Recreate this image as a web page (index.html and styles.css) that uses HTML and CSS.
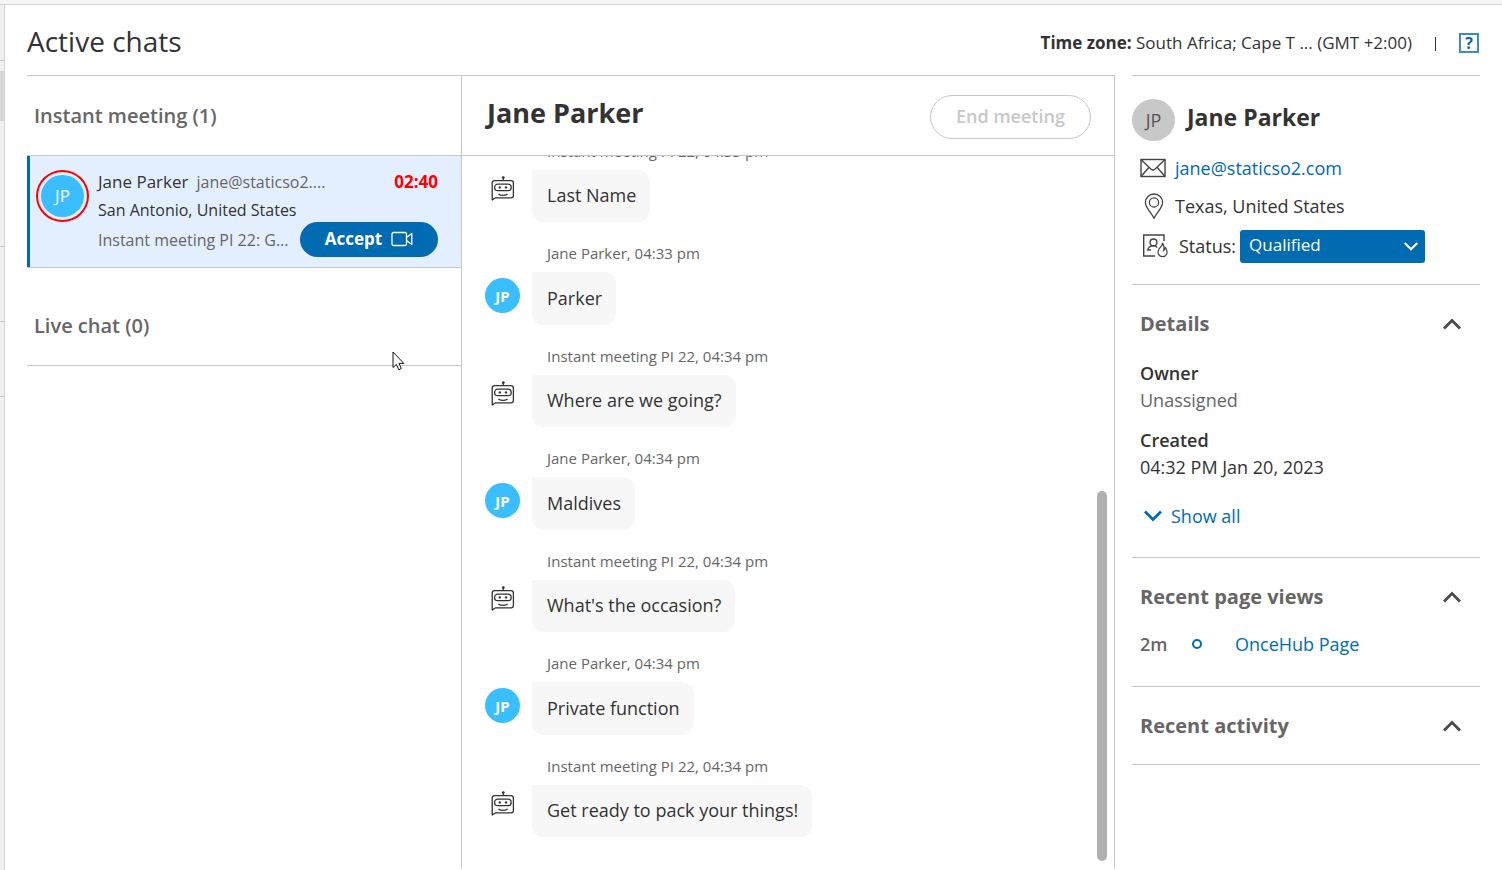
FILE: index.html
```html
<!DOCTYPE html>
<html lang="en">
<head>
    <meta charset="UTF-8">
    <meta name="viewport" content="width=device-width, initial-scale=1.0">
    <title>Active chats</title>
    <link rel="stylesheet" href="styles.css">
</head>
<body>

<!-- shared icons -->
<svg class="sprite" width="0" height="0" aria-hidden="true">
    <symbol id="icon-bot" viewBox="0 0 24 26">
        <path d="M1.2 24 V7 Q1.2 4.6 3.6 4.6 H20 Q22.4 4.6 22.4 7 V19.4 Q22.4 21.8 20 21.8 H4.6 Z" fill="none" stroke="#333" stroke-width="1.3" stroke-linejoin="round"/>
        <rect x="3.6" y="8.2" width="16.6" height="6.4" rx="3.2" fill="none" stroke="#333" stroke-width="1.3"/>
        <path d="M12.3 4.6 V2" stroke="#333" stroke-width="1.2"/>
        <circle cx="12.3" cy="1.6" r="1.4" fill="#333"/>
        <circle cx="8.8" cy="11.4" r="1.2" fill="#333"/>
        <circle cx="15" cy="11.4" r="1.2" fill="#333"/>
        <path d="M7.4 18.1 Q12 20.6 16.6 18.1" fill="none" stroke="#333" stroke-width="1.2"/>
    </symbol>
    <symbol id="icon-up" viewBox="0 0 20 14">
        <path d="M2 11.5 L10 3.5 L18 11.5" fill="none" stroke="currentColor" stroke-width="2.8"/>
    </symbol>
    <symbol id="icon-down" viewBox="0 0 20 14">
        <path d="M2 2.5 L10 10.5 L18 2.5" fill="none" stroke="currentColor" stroke-width="2.8"/>
    </symbol>
</svg>

<div class="topbar"></div>
<div class="app">
    <nav class="rail">
        <div class="rail-item first"></div>
        <div class="rail-active"></div>
        <div class="rail-item tall"></div>
        <div class="rail-item"></div>
        <div class="rail-item"></div>
    </nav>

    <main class="page">
        <header class="page-header">
            <h1>Active chats</h1>
            <div class="timezone">
                <span><b>Time zone:</b> South Africa; Cape T ... (GMT +2:00)</span>
                <span class="divider"></span>
                <a class="help" href="#" aria-label="Help">?</a>
            </div>
        </header>

        <div class="columns">
            <section class="queue">
                <h2>Instant meeting (1)</h2>
                <article class="card">
                    <div class="ring"><span class="avatar large">JP</span></div>
                    <div class="card-body">
                        <div class="card-row">
                            <span class="card-name">Jane Parker</span>
                            <span class="card-email">jane@staticso2....</span>
                            <span class="timer">02:40</span>
                        </div>
                        <div class="card-row">San Antonio, United States</div>
                        <div class="card-row last">
                            <span class="card-source">Instant meeting PI 22: G...</span>
                            <button class="accept" type="button">
                                Accept
                                <svg width="22" height="16" viewBox="0 0 22 16" fill="none" stroke="#fff" stroke-width="1.3" stroke-linejoin="round" aria-hidden="true">
                                    <rect x="1" y="1.5" width="14.5" height="13" rx="1.5"/>
                                    <path d="M15.5 6.5 L20.8 2.5 V13.5 L15.5 9.5"/>
                                </svg>
                            </button>
                        </div>
                    </div>
                </article>
                <h2 class="live">Live chat (0)</h2>
            </section>

            <section class="chat">
                <div class="chat-header">
                    <h2>Jane Parker</h2>
                    <button class="end" type="button" disabled>End meeting</button>
                </div>
                <div class="chat-body">
                    <div class="messages">
                        <div class="message">
                            <div class="meta">Instant meeting PI 22, 04:33 pm</div>
                            <svg class="bot" aria-hidden="true"><use href="#icon-bot"/></svg>
                            <p class="bubble">Last Name</p>
                        </div>
                        <div class="message visitor">
                            <div class="meta">Jane Parker, 04:33 pm</div>
                            <span class="avatar">JP</span>
                            <p class="bubble">Parker</p>
                        </div>
                        <div class="message">
                            <div class="meta">Instant meeting PI 22, 04:34 pm</div>
                            <svg class="bot" aria-hidden="true"><use href="#icon-bot"/></svg>
                            <p class="bubble">Where are we going?</p>
                        </div>
                        <div class="message visitor">
                            <div class="meta">Jane Parker, 04:34 pm</div>
                            <span class="avatar">JP</span>
                            <p class="bubble">Maldives</p>
                        </div>
                        <div class="message">
                            <div class="meta">Instant meeting PI 22, 04:34 pm</div>
                            <svg class="bot" aria-hidden="true"><use href="#icon-bot"/></svg>
                            <p class="bubble">What's the occasion?</p>
                        </div>
                        <div class="message visitor">
                            <div class="meta">Jane Parker, 04:34 pm</div>
                            <span class="avatar">JP</span>
                            <p class="bubble">Private function</p>
                        </div>
                        <div class="message">
                            <div class="meta">Instant meeting PI 22, 04:34 pm</div>
                            <svg class="bot" aria-hidden="true"><use href="#icon-bot"/></svg>
                            <p class="bubble">Get ready to pack your things!</p>
                        </div>
                    </div>
                    <div class="track"><div class="thumb"></div></div>
                </div>
            </section>

            <aside class="profile">
                <div class="contact">
                    <div class="contact-name">
                        <span class="avatar grey">JP</span>
                        <h2>Jane Parker</h2>
                    </div>
                    <div class="contact-row">
                        <svg width="26" height="26" viewBox="0 0 26 26" fill="none" stroke="#444" stroke-width="1.4" aria-hidden="true">
                            <rect x="1" y="4.5" width="24" height="17"/>
                            <path d="M1 4.5 L10.8 14 L13 15.2 L15.2 14 L25 4.5 M1 21.5 L9 12.3 M25 21.5 L17 12.3"/>
                        </svg>
                        <a href="#">jane@staticso2.com</a>
                    </div>
                    <div class="contact-row">
                        <svg width="26" height="26" viewBox="0 0 26 26" fill="none" stroke="#444" stroke-width="1.3" aria-hidden="true">
                            <path d="M14 25.2 C11.5 20 5.4 14.6 5.4 9.4 A8.6 8.4 0 0 1 22.6 9.4 C22.6 14.6 16.5 20 14 25.2 Z"/>
                            <circle cx="14" cy="9.4" r="4.6"/>
                        </svg>
                        <span>Texas, United States</span>
                    </div>
                    <div class="contact-row status">
                        <svg width="26" height="26" viewBox="0 0 26 26" fill="none" stroke="#444" stroke-width="1.4" aria-hidden="true">
                            <path d="M22 8 V2 H1.7 V23 H13"/>
                            <circle cx="11.5" cy="9.4" r="3.4"/>
                            <path d="M5.6 17.6 C6 14.6 8 12.9 11.5 12.9 C13.4 12.9 14.6 13.6 15.2 14.6 M5.6 17 H9"/>
                            <path d="M20.3 9.8 C21 12.6 18 14 16.8 16.4 C15 20 16.8 23.6 20.6 23.6 C24.6 23.6 26 19.6 24.4 16.4 L23.4 14.2 C23.4 16 22.6 16.8 21.6 17.6 C22.4 14.8 22.2 12 20.3 9.8 Z" stroke-width="1.2"/>
                        </svg>
                        <label for="status">Status:</label>
                        <span class="select">
                            <select id="status">
                                <option>Qualified</option>
                            </select>
                            <svg width="16" height="11" viewBox="0 0 20 14" aria-hidden="true"><use href="#icon-down"/></svg>
                        </span>
                    </div>
                </div>

                <div class="panel details">
                    <button class="panel-title" type="button">Details <svg class="chevron" aria-hidden="true"><use href="#icon-up"/></svg></button>
                    <dl>
                        <dt>Owner</dt>
                        <dd class="muted">Unassigned</dd>
                        <dt>Created</dt>
                        <dd>04:32 PM Jan 20, 2023</dd>
                    </dl>
                    <a class="show-all" href="#"><svg class="chevron" aria-hidden="true"><use href="#icon-down"/></svg>Show all</a>
                </div>

                <div class="panel views">
                    <button class="panel-title" type="button">Recent page views <svg class="chevron" aria-hidden="true"><use href="#icon-up"/></svg></button>
                    <div class="view">
                        <span class="age">2m</span>
                        <span class="dot"></span>
                        <a href="#">OnceHub Page</a>
                    </div>
                </div>

                <div class="panel activity">
                    <button class="panel-title" type="button">Recent activity <svg class="chevron" aria-hidden="true"><use href="#icon-up"/></svg></button>
                </div>
            </aside>
        </div>
    </main>
</div>

<svg class="pointer" width="13" height="20" viewBox="0 0 13 20" aria-hidden="true">
    <path d="M1 1 V16.5 L4.4 13.4 L6.8 18.8 L9.3 17.6 L7 12.4 H11.8 Z" fill="#fff" stroke="#112" stroke-width="1"/>
</svg>

</body>
</html>
```
FILE: styles.css
```css
* {
    box-sizing: border-box;
}
body {
    font-family: "Open Sans", "Noto Sans", sans-serif;
    font-size: 18px;
    line-height: 24px;
    color: #333;
    background-color: #fff;
    margin: 0;
    height: 100vh;
    display: flex;
    flex-direction: column;
    overflow: hidden;
}
h1, h2, p, dl, dd {
    margin: 0;
}
a {
    color: #006bb1;
    text-decoration: none;
}
button, select {
    font: inherit;
    cursor: pointer;
}
.sprite {
    position: absolute;
}
.topbar {
    height: 5px;
    flex: none;
    background-color: #f5f5f5;
    border-bottom: 1px solid #d5d5d5;
}
.app {
    flex: 1;
    min-height: 0;
    display: flex;
}

/* left edge of the site menu */
.rail {
    width: 5px;
    flex: none;
    background-color: #f0f0f0;
    border-right: 1px solid #d5d5d5;
}
.rail-item {
    height: 75px;
    border-bottom: 1px solid #c8c8c8;
}
.rail-item.first {
    height: 56px;
    margin-bottom: 10px;
}
.rail-item.tall {
    height: 126px;
}
.rail-active {
    height: 50px;
    background-color: #d6d7d9;
}

.page {
    flex: 1;
    min-width: 0;
    display: flex;
    flex-direction: column;
    padding: 0 22px 2px;
}
.page-header {
    height: 70px;
    flex: none;
    display: flex;
    align-items: center;
    justify-content: space-between;
    padding-top: 2px;
}
h1 {
    font-size: 28px;
    line-height: 36px;
    font-weight: 400;
}
.timezone {
    display: flex;
    align-items: center;
    font-size: 17px;
    padding: 4px 1px 0 0;
}
.divider {
    width: 1px;
    height: 14px;
    background-color: #333;
    margin: 2px 23px 0;
}
.help {
    width: 20px;
    height: 20px;
    border: 2px solid #3c8cc8;
    font-size: 16px;
    line-height: 16px;
    font-weight: 700;
    text-align: center;
}
.columns {
    flex: 1;
    min-height: 0;
    display: grid;
    grid-template-columns: 435px minmax(0, 1fr) 365px;
    grid-template-rows: minmax(0, 1fr);
}

/* queue */
.queue, .chat {
    border-top: 1px solid #c6c6c6;
    border-right: 1px solid #c6c6c6;
}
.queue h2 {
    font-size: 20px;
    line-height: 79px;
    font-weight: 600;
    color: #666;
    padding-left: 7px;
}
.queue .live {
    line-height: 78px;
    padding-top: 19px;
    border-bottom: 1px solid #c6c6c6;
}
.card {
    display: flex;
    gap: 9px;
    background-color: #e3efff;
    border-top: 1px solid #c6c6c6;
    border-bottom: 1px solid #c6c6c6;
    box-shadow: inset 3px 0 #006bb1;
    padding: 12px 23px 12px 9px;
}
.avatar {
    display: flex;
    align-items: center;
    justify-content: center;
    width: 35px;
    height: 35px;
    border-radius: 50%;
    background-color: #3bbeff;
    color: #fff;
    font-size: 15px;
    font-weight: 700;
}
.avatar.large {
    width: 43px;
    height: 42px;
    font-size: 17px;
    font-weight: 400;
}
.avatar.grey {
    width: 43px;
    height: 42px;
    background-color: #c8c8c8;
    color: #555;
    font-size: 18px;
    font-weight: 400;
}
.ring {
    flex: none;
    width: 53px;
    height: 52px;
    margin-top: 2px;
    display: flex;
    align-items: center;
    justify-content: center;
    border: 2px solid #f00;
    border-radius: 50%;
}
.card-body {
    flex: 1;
    min-width: 0;
    font-size: 16px;
}
.card-row {
    display: flex;
    align-items: center;
    height: 28px;
}
.card-row.last {
    height: 31px;
    justify-content: space-between;
}
.card-name {
    font-size: 17px;
    margin-right: 8px;
}
.card-email, .card-source {
    color: #666;
}
.timer {
    margin-left: auto;
    font-size: 17px;
    font-weight: 700;
    color: #f00;
}
.accept {
    flex: none;
    width: 138px;
    height: 35px;
    display: flex;
    align-items: center;
    justify-content: center;
    gap: 9px;
    border: none;
    border-radius: 18px;
    background-color: #006bb1;
    color: #fff;
    font-size: 17px;
    font-weight: 700;
    padding: 0 0 2px;
}

/* conversation */
.chat {
    display: flex;
    flex-direction: column;
}
.chat-header {
    height: 80px;
    flex: none;
    display: flex;
    align-items: center;
    justify-content: space-between;
    border-bottom: 1px solid #c6c6c6;
    padding: 0 23px 0 25px;
}
.chat-header h2 {
    font-size: 27px;
    line-height: 36px;
    font-weight: 700;
    padding-bottom: 6px;
}
.end {
    width: 161px;
    height: 44px;
    border: 1px solid #c8c8c8;
    border-radius: 22px;
    background-color: #fff;
    color: #c8c8c8;
    font-weight: 600;
    margin-top: 2px;
    padding: 0 0 2px;
    cursor: default;
}
.chat-body {
    flex: 1;
    min-height: 0;
    display: flex;
    justify-content: space-between;
    overflow: hidden;
}
.messages {
    flex: 1;
    display: flex;
    flex-direction: column;
    justify-content: flex-end;
    gap: 21px;
    padding: 0 23px 31px;
}
.message {
    flex: none;
    display: grid;
    grid-template-columns: 35px minmax(0, 1fr);
    column-gap: 12px;
}
.meta {
    grid-column: 2;
    font-size: 15px;
    line-height: 20px;
    color: #666;
    padding: 0 0 9px 15px;
}
.message .avatar, .bot {
    margin-top: 6px;
}
.bot {
    width: 24px;
    height: 26px;
    justify-self: center;
}
.bubble {
    justify-self: start;
    background-color: #f7f7f7;
    border-radius: 0 12px 12px 12px;
    padding: 13px 14px 15px 15px;
}
.visitor .bubble {
    padding-top: 14px;
}
.track {
    width: 10px;
    margin: 0 7px 7px 0;
    display: flex;
    align-items: flex-end;
}
.thumb {
    width: 10px;
    height: 370px;
    border-radius: 5px;
    background-color: #b0b0b0;
}

/* visitor details */
.profile {
    margin-left: 17px;
    border-top: 1px solid #c6c6c6;
}
.contact {
    padding: 23px 0 18px;
    border-bottom: 1px solid #c6c6c6;
}
.contact-name {
    display: flex;
    align-items: center;
    gap: 12px;
    margin-bottom: 8px;
}
.contact-name h2 {
    font-size: 23px;
    line-height: 32px;
    font-weight: 700;
    padding-bottom: 6px;
}
.contact-row {
    display: flex;
    align-items: center;
    height: 38px;
    gap: 9px;
    padding-left: 8px;
}
.contact-row.status {
    height: 41px;
    padding-left: 10px;
}
.contact-row label {
    padding-left: 2px;
    margin-right: -5px;
}
.select {
    position: relative;
    display: flex;
    margin-top: 2px;
}
.select select {
    appearance: none;
    width: 185px;
    height: 33px;
    border: none;
    border-radius: 3px;
    background-color: #006bb1;
    color: #fff;
    font-size: 17px;
    padding: 0 32px 3px 9px;
}
.select svg {
    position: absolute;
    right: 6px;
    top: 11px;
    color: #fff;
    pointer-events: none;
}
.panel {
    padding: 27px 8px;
    border-bottom: 1px solid #c6c6c6;
}
.panel-title {
    width: 100%;
    display: flex;
    align-items: center;
    justify-content: space-between;
    border: none;
    background: none;
    color: #666;
    font-size: 20px;
    font-weight: 700;
    padding: 0 10px 0 0;
}
.chevron {
    width: 20px;
    height: 14px;
}
.panel-title .chevron {
    color: #4a4a4a;
}
.details {
    padding-bottom: 29px;
}
dl {
    padding-top: 23px;
}
dt {
    font-weight: 600;
    line-height: 28px;
}
dd {
    line-height: 27px;
}
dd.muted {
    color: #666;
    margin-bottom: 12px;
}
.show-all {
    display: flex;
    align-items: center;
    gap: 8px;
    padding: 23px 0 0 3px;
}
.views {
    padding-bottom: 30px;
}
.view {
    display: flex;
    align-items: center;
    padding-top: 23px;
}
.age {
    width: 52px;
    font-weight: 600;
    color: #666;
}
.dot {
    width: 10px;
    height: 10px;
    border: 2px solid #006bb1;
    border-radius: 50%;
    margin-right: 33px;
}
.activity {
    padding-bottom: 26px;
}

/* mouse pointer lies over the page */
.pointer {
    position: absolute;
    left: 392px;
    top: 351px;
}
```
